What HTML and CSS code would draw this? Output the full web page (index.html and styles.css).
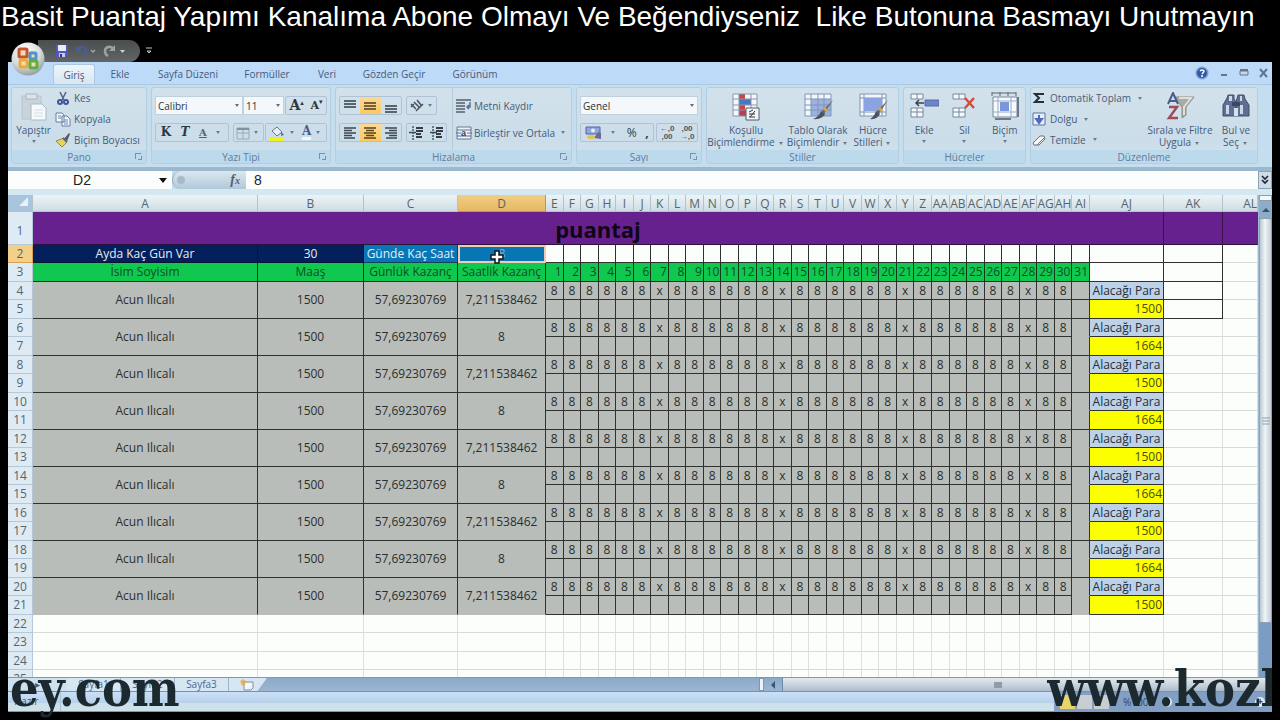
FILE: index.html
```html
<!DOCTYPE html>
<html lang="tr">
<head>
<meta charset="utf-8">
<title>puantaj</title>
<link rel="stylesheet" href="styles.css">
</head>
<body>
<h1 class="banner">Basit Puantaj Yapımı Kanalıma Abone Olmayı Ve Beğendiyseniz&nbsp; Like Butonuna Basmayı Unutmayın</h1>

<div class="window">
  <header class="titlebar">
    <button class="office" aria-label="Office">
      <svg width="36" height="36" viewBox="0 0 36 36"><defs><radialGradient id="orb" cx=".4" cy=".25" r=".8"><stop offset="0" stop-color="#fff"/><stop offset=".6" stop-color="#d5d9d9"/><stop offset="1" stop-color="#8e9696"/></radialGradient></defs><circle cx="18" cy="18" r="16.500" fill="url(#orb)"/><path d="M10 10h15v15H10z" fill="#f5dcae"/><g fill="none" stroke-width="3"><rect x="9" y="8" width="8" height="8" rx="1" stroke="#c4552e"/><rect x="20" y="12" width="6" height="6" rx="1" stroke="#4d94cd"/><rect x="10" y="19" width="7" height="7" rx="1" stroke="#edaa3c"/><rect x="20" y="20" width="7" height="7" rx="1" stroke="#63ae42"/></g></svg>
    </button>
    <div class="quick">
      <button aria-label="Kaydet"><svg width="14" height="14" viewBox="0 0 14 14"><path d="M1 1h12v12H1z" fill="#5457b8"/><path d="M3 1h8v6H3z" fill="#e8ecfa"/><path d="M4 9h6v4H4z" fill="#c9cbe8"/><path d="M5 10h2v3H5z" fill="#34377e"/></svg></button>
      <button aria-label="Geri al"><svg width="22" height="14" viewBox="0 0 22 14"><path d="M3 6c2-4 8-4 8 1 0 2-1 4-3 5" fill="none" stroke="#4c5a96" stroke-width="2.500"/><path d="M1 2v6h6z" fill="#4c5a96"/><path d="M16 6l2 2 2-2" fill="none" stroke="#a0a4a6" stroke-width="1.500"/></svg></button>
      <button aria-label="Yinele"><svg width="24" height="14" viewBox="0 0 24 14"><path d="M10 5C8 1 2 3 2 7c0 2 1 4 3 5" fill="none" stroke="#9ca1a2" stroke-width="2.500"/><path d="M12 1v6H6z" fill="#9ca1a2"/><path d="M17 6h5l-2.500 3z" fill="#d0d3d4"/></svg></button>
    </div>
    <button class="more" aria-label="Özelleştir"><svg width="6" height="8" viewBox="0 0 6 8"><path d="M0 1h6M1 4h4l-2 2z" stroke="#c8c8c8" fill="none"/></svg></button>
  </header>

  <nav class="tabs">
    <button class="tab active">Giriş</button><button class="tab t2">Ekle</button><button class="tab t3">Sayfa Düzeni</button><button class="tab t4">Formüller</button><button class="tab t5">Veri</button><button class="tab t6">Gözden Geçir</button><button class="tab t7">Görünüm</button>
    <div class="winctl">
      <button aria-label="Yardım"><svg width="14" height="14" viewBox="0 0 14 14"><circle cx="7" cy="7" r="6.500" fill="#7d9ed0"/><circle cx="7" cy="7" r="5" fill="#3159a6"/><path d="M5 5q2-2 4 0 0 1-2 3M7 9v2" stroke="#fff" stroke-width="1.500" fill="none"/></svg></button>
      <button aria-label="Küçült"><svg width="10" height="14" viewBox="0 0 10 14"><path d="M2 9h6" stroke="#5e7698" stroke-width="2"/></svg></button>
      <button aria-label="Önceki boyut"><svg width="10" height="14" viewBox="0 0 10 14"><path d="M1 5h8v4H1z" fill="#cbd8e4" stroke="#5e7698"/><path d="M1 4h8" stroke="#5e7698" stroke-width="2"/></svg></button>
      <button aria-label="Kapat"><svg width="10" height="14" viewBox="0 0 10 14"><path d="M1 3l7 8M8 3l-7 8" stroke="#5e7698" stroke-width="2"/></svg></button>
    </div>
  </nav>

  <div class="ribbon">
    <section class="group pano">
      <div class="body">
        <button class="big paste"><svg width="32" height="30" viewBox="0 0 32 30"><path d="M4 4h19v23H4z" fill="#c9d3da" stroke="#b8c4cc"/><path d="M8 2h11v5H8z" fill="#dde3e6" stroke="#aab6c0"/><path d="M13 12h11l4 4v12H13z" fill="#f7fafb" stroke="#a6b9c9"/><path d="M16 18h9M16 21h9M16 24h9" stroke="#d2dce5"/></svg><span>Yapıştır</span><i class="caret"></i></button>
        <div class="list">
          <button><svg width="16" height="16" viewBox="0 0 16 16"><path d="M5 2l4 8M11 2l-4 8" stroke="#586786" stroke-width="1.600"/><g fill="none" stroke="#3e5694" stroke-width="2"><circle cx="5" cy="12" r="2"/><circle cx="11" cy="12" r="2"/></g></svg>Kes</button>
          <button><svg width="16" height="16" viewBox="0 0 16 16"><g fill="#f4f8fd" stroke="#667da8"><path d="M1 2h6l2 2v7H1zM7 5h5l3 3v7H7z"/></g><path d="M3 5h3M3 7h4M9 9h4M9 11h4M9 13h4" stroke="#6f89bb"/></svg>Kopyala</button>
          <button><svg width="16" height="16" viewBox="0 0 16 16"><path d="M9 7l5-6 1 1-3 7z" fill="#53565e"/><path d="M1 9l8-3 3 4-5 5z" fill="#e8d45d" stroke="#8c8950"/><path d="M8 6l4 4" stroke="#54648c" stroke-width="2"/></svg>Biçim Boyacısı</button>
        </div>
      </div>
      <footer>Pano<i class="launch"></i></footer>
    </section>

    <section class="group font">
      <div class="body rows">
        <div class="row">
          <label class="combo fam"><select aria-label="Yazı tipi"><option>Calibri</option></select></label><label class="combo size"><select aria-label="Boyut"><option>11</option></select></label>
          <div class="set end"><button class="serif">A<sup>▴</sup></button><button class="serif small">A<sup>▾</sup></button></div>
        </div>
        <div class="row">
          <div class="set s1"><button class="serif"><b>K</b></button><button class="serif"><i>T</i></button><button class="serif small"><u>A</u></button><i class="caret"></i></div>
          <div class="set s2"><button aria-label="Kenarlık"><svg width="14" height="14" viewBox="0 0 14 14"><path d="M1 2h12v11H1zM7 2v11M1 7h12" fill="none" stroke="#9aa9b7"/><path d="M1 3h12" stroke="#8292a2" stroke-width="2"/></svg></button><i class="caret"></i></div>
          <div class="set s3"><button aria-label="Dolgu rengi"><svg width="16" height="16" viewBox="0 0 16 16"><path d="M3 6l5-4 5 5-5 4z" fill="#eaf0f2" stroke="#67788e"/><path d="M12 6l3 4-3 1z" fill="#5677b4"/><path d="M0 12h15v4H0z" fill="#f3f11c"/></svg></button><i class="caret"></i><button class="serif fc">A</button><i class="caret"></i></div>
        </div>
      </div>
      <footer>Yazı Tipi<i class="launch"></i></footer>
    </section>

    <section class="group align">
      <div class="body rows half">
        <div class="row">
          <div class="set three"><button aria-label="Üste hizala"><svg width="14" height="14"><path d="M1 2h12M1 5h12M1 8h12" stroke="#333d46" stroke-width="1.500"/></svg></button><button class="on" aria-label="Ortaya hizala"><svg width="14" height="14"><path d="M1 4h12M1 7h12M1 10h12" stroke="#4d3c1c" stroke-width="1.500"/></svg></button><button aria-label="Alta hizala"><svg width="14" height="14"><path d="M1 7h12M1 10h12M1 13h12" stroke="#333d46" stroke-width="1.500"/></svg></button></div>
          <div class="set s2"><button aria-label="Yönlendirme"><svg width="16" height="14" viewBox="0 0 16 14"><path d="M2 5l5 5M2 8l3-3M5 3l5 5M8 1l4 5M7 12l7-7" stroke="#49525b" stroke-width="1.500" fill="none"/></svg></button><i class="caret"></i></div>
        </div>
        <div class="row">
          <div class="set three"><button aria-label="Sola"><svg width="14" height="14"><path d="M1 2h12M1 4.500h8M1 7h12M1 9.500h8M1 12h11" stroke="#3d4852" stroke-width="1.400"/></svg></button><button class="on" aria-label="Ortala"><svg width="14" height="14"><path d="M1 2h12M3 4.500h8M1 7h12M3 9.500h8M1 12h12" stroke="#5b431a" stroke-width="1.400"/></svg></button><button aria-label="Sağa"><svg width="14" height="14"><path d="M1 2h12M5 4.500h8M1 7h12M5 9.500h8M2 12h11" stroke="#3d4852" stroke-width="1.400"/></svg></button></div>
          <div class="set two"><button aria-label="Girintiyi azalt"><svg width="15" height="14"><path d="M7 2h7M7 5h7M7 8h5M7 11h6" stroke="#333d46" stroke-width="2"/><path d="M4 0v14" stroke="#4d5862" stroke-width="1.500" stroke-dasharray="2 1"/><path d="M7 6.500H0" stroke="#3d4852" stroke-width="1.500"/></svg></button><button aria-label="Girintiyi artır"><svg width="15" height="14"><path d="M7 2h7M7 5h7M7 8h5M7 11h6" stroke="#333d46" stroke-width="2"/><path d="M4 0v14" stroke="#4d5862" stroke-width="1.500" stroke-dasharray="2 1"/><path d="M8 6.500H1" stroke="#3d4852" stroke-width="1.500"/></svg></button></div>
        </div>
      </div>
      <div class="body rows wrapcol">
        <div class="row"><button class="txt"><svg width="16" height="14" viewBox="0 0 16 14"><path d="M0 1h15M0 4h9M0 7h9M0 10h9M0 13h9" stroke="#55606c" stroke-width="1.500"/><path d="M14 3v5h-3M13 6l-2 2 2 2" stroke="#55739b" stroke-width="1.500" fill="none"/></svg>Metni Kaydır</button></div>
        <div class="row"><button class="txt"><svg width="16" height="14" viewBox="0 0 16 14"><path d="M1 1h14v12H1z" fill="#eef3f8" stroke="#67788c"/><path d="M1 4h14M1 10h14M0 7h5M11 7h5" stroke="#5770a0"/><text x="5" y="10" font-size="9" font-weight="bold" fill="#3a4250" font-family="Liberation Sans, sans-serif">a</text></svg>Birleştir ve Ortala<i class="caret"></i></button></div>
      </div>
      <footer>Hizalama<i class="launch"></i></footer>
    </section>

    <section class="group number">
      <div class="body rows">
        <div class="row"><label class="combo fmt"><select aria-label="Sayı biçimi"><option>Genel</option></select></label></div>
        <div class="row">
          <div class="set n1"><button aria-label="Para birimi"><svg width="17" height="16" viewBox="0 0 17 16"><path d="M1 2h14v7H1z" fill="#90a6dd" stroke="#5265a4"/><circle cx="8" cy="5.500" r="2" fill="#e8eefb"/><path d="M9 13l4-6 3 1v6z" fill="#6c6d93"/><ellipse cx="6" cy="12" rx="4" ry="2" fill="#ddc453"/></svg></button><i class="caret"></i><button class="pct">%</button><button class="pct"><b>,</b></button></div>
          <div class="set end n2"><button class="dec">←,0<br>,00</button><button class="dec">,00<br>→,0</button></div>
        </div>
      </div>
      <footer>Sayı<i class="launch"></i></footer>
    </section>

    <section class="group styles">
      <div class="body">
        <button class="big w1"><svg width="30" height="30" viewBox="0 0 30 30"><path d="M2 2h24v22H2z" fill="#f4f8fd"/><path d="M8 2h6v22H8z" fill="#c84540"/><path d="M8 7h12v6H8z" fill="#4a78c0"/><path d="M8 18h10v6H8z" fill="#b5404f"/><path d="M2 2h24v22H2zM8 2v22M20 2v22M2 7h24M2 13h24M2 18h24" fill="none" stroke="#8797ac"/><path d="M15 16h13v12H15z" fill="#f4f5f6" stroke="#555e69"/><path d="M18 20l4-2M18 22h6M24 19l-5 6M18 25h6" stroke="#333" fill="none"/></svg><span>Koşullu<br>Biçimlendirme<i class="caret"></i></span></button>
        <button class="big w2"><svg width="30" height="30" viewBox="0 0 30 30"><path d="M2 2h26v22H2z" fill="#f2f7fc"/><path d="M8 7h20v17H8z" fill="#9bb1e2"/><path d="M2 2h26v22H2zM8 2v22M15 2v22M21 2v22M2 7h26M2 13h26M2 18h26" fill="none" stroke="#8096b2"/><path d="M30 8L21 22l-3-2z" fill="#6b6b63"/><path d="M18 19l4 3q-3 6-12 5 6-2 8-8z" fill="#4d5160"/><path d="M21 16l3 3" stroke="#d3a74d" stroke-width="3"/></svg><span>Tablo Olarak<br>Biçimlendir<i class="caret"></i></span></button>
        <button class="big w3"><svg width="30" height="30" viewBox="0 0 30 30"><path d="M2 2h26v22H2z" fill="#f2f7fc" stroke="#8096b2"/><path d="M6 2v22M24 2v22M2 6h26M2 20h26" stroke="#8096b2"/><path d="M6 6h18v13H6z" fill="#8ba3df"/><path d="M30 8L21 22l-3-2z" fill="#6b6b63"/><path d="M18 19l4 3q-3 6-10 5 4-2 6-8z" fill="#4d5160"/><path d="M21 16l3 3" stroke="#d3a74d" stroke-width="3"/></svg><span>Hücre<br>Stilleri<i class="caret"></i></span></button>
      </div>
      <footer>Stiller</footer>
    </section>

    <section class="group cells">
      <div class="body">
        <button class="big"><svg width="30" height="30" viewBox="0 0 30 30"><path d="M2 2h12v5H2zM8 2v5M2 16h12v9H2zM8 16v9M2 20h12" fill="#f6f9fc" stroke="#76879c"/><path d="M16 8h14v6H16z" fill="#6d85c8" stroke="#566ba7"/><path d="M15 11H7M10 8l-3 3 3 3" fill="none" stroke="#39424e" stroke-width="1.500"/></svg><span>Ekle</span><i class="caret"></i></button>
        <button class="big"><svg width="30" height="30" viewBox="0 0 30 30"><path d="M4 2h12v5H4zM10 2v5M4 16h12v9H4zM10 16v9M4 20h12" fill="#f6f9fc" stroke="#76879c"/><path d="M5 8h12v6H5z" fill="#d4dfec"/><path d="M16 6l9 10M25 6l-9 10" stroke="#d64a3b" stroke-width="2.500"/></svg><span>Sil</span><i class="caret"></i></button>
        <button class="big"><svg width="30" height="30" viewBox="0 0 30 30"><path d="M2 1h24M2 0v4M10 0v4M18 0v4M26 0v4" stroke="#5b6775"/><path d="M3 5h24v20H3z" fill="#f6f9fc" stroke="#76879c"/><path d="M8 5v20M21 5v20M3 9h24M3 20h24" stroke="#9aacc2"/><path d="M10 10h9v9h-9z" fill="#7a96dc"/><path d="M28 5v20M5 27h16" stroke="#6a7889" stroke-width="2"/></svg><span>Biçim</span><i class="caret"></i></button>
      </div>
      <footer>Hücreler</footer>
    </section>

    <section class="group edit">
      <div class="body">
        <div class="list">
          <button><svg width="16" height="16" viewBox="0 0 16 16"><path d="M12 5V4H4l4 4-4 4h8v-1" fill="none" stroke="#22303a" stroke-width="2"/></svg>Otomatik Toplam<i class="caret"></i></button>
          <button><svg width="16" height="16" viewBox="0 0 16 16"><path d="M2 2h12v12H2z" fill="#e7eefa" stroke="#5870a8"/><path d="M8 4v6M5 8l3 4 3-4z" stroke="#5068c0" stroke-width="2" fill="#5068c0"/></svg>Dolgu<i class="caret"></i></button>
          <button><svg width="16" height="16" viewBox="0 0 16 16"><path d="M2 11l7-7h4l1 3-6 6H3z" fill="#f4f5f8" stroke="#69737f"/><path d="M6 13l7-7" stroke="#69737f"/></svg>Temizle<i class="caret"></i></button>
        </div>
        <button class="big w4"><svg width="30" height="30" viewBox="0 0 30 30"><path d="M9 5h20l-8 10v8l-4 3V15z" fill="#a9aba4" stroke="#888a84"/><path d="M14 6h12l-7 9v8" fill="none" stroke="#dfe0da" stroke-width="2"/><path d="M3 12L8 1l5 11M5 9h6" fill="none" stroke="#4a5d91" stroke-width="2"/><path d="M4 15h8L4 26h9" fill="none" stroke="#a14a58" stroke-width="2.500"/></svg><span>Sırala ve Filtre<br>Uygula<i class="caret"></i></span></button>
        <button class="big w5"><svg width="30" height="30" viewBox="0 0 30 30"><path d="M7 3h6v4l2 3v14H2V13l4-7zM17 3h6l1 4 4 6v11H15V10z" fill="#5e6f91" stroke="#43506d"/><path d="M5 13h3v9H5zM19 13h3v9h-3zM8 4h3v5H8zM19 4h2v5h-2z" fill="#cdd7e6"/><path d="M11 10h8v4h-8z" fill="#3c4761"/><path d="M13 16h4v8h-4z" fill="#d2e2ec"/></svg><span>Bul ve<br>Seç<i class="caret"></i></span></button>
      </div>
      <footer>Düzenleme</footer>
    </section>
  </div>

  <div class="formula">
    <input class="name" aria-label="Ad kutusu" value="D2"><i class="drop"></i>
    <div class="fx"><i class="knob"></i><em>f<small>x</small></em></div>
    <input class="value" aria-label="Formül çubuğu" value="8">
    <button class="expand" aria-label="Genişlet"><svg width="8" height="10" viewBox="0 0 8 10"><path d="M1 1l3 3 3-3M1 5l3 3 3-3" fill="none" stroke="#222c33" stroke-width="1.700"/></svg></button>
  </div>

  <main class="sheet">
    <div class="viewport"><table class="grid" id="grid"></table></div>
    <div class="vscroll"><i class="split"></i><button class="up" aria-label="Yukarı"><svg width="8" height="5"><path d="M0 5l4-4 4 4z" fill="#34546f"/></svg></button><div class="thumb"><svg width="8" height="8"><path d="M0 1h8M0 4h8M0 7h8" stroke="#8d9fae"/></svg></div></div>
  </main>

  <div class="bottom">
    <div class="nav">◂ ▸ ▸</div>
    <button class="stab">Sayfa1</button><button class="stab">Sayfa2</button><button class="stab">Sayfa3</button>
    <button class="stab new" aria-label="Yeni sayfa"><svg width="16" height="12" viewBox="0 0 16 12"><path d="M5 3h9v6l-2 2H5z" fill="#f3f6fa" stroke="#7b8fa9"/><path d="M4 0v7M1 3h7M2 1l4 5M6 1L2 6" stroke="#e4a93a"/></svg></button>
    <div class="hscroll"><i class="handle"></i><button aria-label="Sola kaydır"><svg width="6" height="8"><path d="M5 0v8L1 4z" fill="#34577e"/></svg></button><div class="hthumb"><i></i></div></div>
  </div>
  <div class="status"><span class="ready">Hazır</span><div class="views"><i class="sel"></i><i></i><i></i><span>%100</span><b>−</b><b class="plus">+</b></div></div>
</div>

<div class="mark left">ey.com</div>
<div class="mark right">www.kozl</div>
<script src="sheet.js"></script>
</body>
</html>
```
FILE: styles.css
```css
* { box-sizing: border-box; }
body { margin: 0; height: 100vh; background: #000; display: flex; flex-direction: column; overflow: hidden; position: relative; font-family: "Open Sans", "Noto Sans", sans-serif; font-size: 10px; color: #465b7c; padding: 0 8px 8px; }
button, input, select { font: inherit; color: inherit; border: 0; background: none; padding: 0; margin: 0; }
button svg { display: block; flex: none; }
.banner { margin: 0 -8px; padding-left: 1px; height: 36px; font: 400 28px/34px "Liberation Sans", Arial, sans-serif; color: #fff; white-space: nowrap; }
.window { flex: 1; min-height: 0; display: flex; flex-direction: column; }

.titlebar { height: 26px; display: flex; align-items: center; position: relative; padding: 3px 0 0 30px; flex: none; }
.office { position: absolute; left: 2px; top: 5px; z-index: 2; }
.quick { height: 22px; width: 102px; border-radius: 0 11px 11px 0; background: linear-gradient(#4b4e4f, #626565); display: flex; align-items: center; gap: 6px; padding-left: 17px; }
.more { margin-left: 6px; }

.tabs { height: 22px; background: #bddaf8; display: flex; padding-left: 45px; flex: none; }
.tab { height: 24px; width: 64px; text-align: center; }
.tab.active { width: 42px; background: linear-gradient(#eef6fb, #d8e6ef); border-radius: 3px 3px 0 0; margin-top: 2px; height: 20px; border: 1px solid #a9c8e4; border-bottom: 0; }
.tab.t2 { width: 50px; } .tab.t3 { width: 86px; } .tab.t4 { width: 72px; } .tab.t5 { width: 48px; } .tab.t6 { width: 86px; } .tab.t7 { width: 76px; }
.winctl { margin-left: auto; display: flex; gap: 10px; align-items: center; padding-right: 3px; }

.ribbon { display: flex; gap: 4px; background: #c5deef; padding: 2px 14px 3px 3px; border-top: 1px solid #aac8df; border-bottom: 4px solid #9bb8cc; height: 87px; flex: none; }
.group { display: flex; flex-wrap: wrap; flex: none; border: 1px solid #b4cddf; border-radius: 3px; background: linear-gradient(#d2e2ec, #cbdde9 70%, #d2e5ef); overflow: hidden; }
.group footer { width: 100%; height: 15px; line-height: 14px; background: #bdd9ec; text-align: center; color: #61799b; position: relative; align-self: flex-end; }
.launch { position: absolute; right: 5px; top: 3px; width: 6px; height: 6px; border-left: 1px solid #7890aa; border-top: 1px solid #7890aa; }
.launch::after { content: ""; position: absolute; right: -1px; bottom: -1px; width: 3px; height: 3px; border-right: 1px solid #7890aa; border-bottom: 1px solid #7890aa; }
.body { display: flex; height: 62px; flex: 1; }
.pano { width: 136px; } .font { width: 180px; } .align { width: 237px; } .number { width: 126px; } .styles { width: 193px; } .cells { width: 123px; } .edit { flex: 1; }

.big { display: flex; flex-direction: column; align-items: center; line-height: 12px; flex: 1; padding-top: 4px; white-space: nowrap; }
.big span { margin-top: 2px; }
.big > .caret { margin: 4px 0 0; }
.paste { flex: none; width: 43px; }
.w1 { flex: none; width: 78px; } .w2 { flex: none; width: 66px; } .w3 { flex: none; width: 44px; }
.w4 { flex: none; width: 70px; margin-left: auto; } .w5 { flex: none; width: 42px; }
.caret { display: inline-block; width: 0; height: 0; border: 2px solid transparent; border-top: 3px solid #6b7d94; border-bottom: 0; vertical-align: middle; margin: 0 2px 0 4px; flex: none; }
.list { display: flex; flex-direction: column; }
.list button { height: 21px; display: flex; align-items: center; gap: 3px; white-space: nowrap; }
.edit .list { padding-left: 0; }

.rows { flex-direction: column; gap: 8px; padding: 8px 3px 0; }
.row { display: flex; height: 19px; }
.half { flex: none; width: 117px; border-right: 1px solid #b6c9d8; }
.wrapcol { padding-left: 3px; }
.combo { position: relative; display: block; background: #f4f8fa; border: 1px solid #c0d1de; height: 19px; }
.combo select { appearance: none; width: 100%; height: 17px; padding: 0 2px; color: #2a333b; display: block; }
.combo::after { content: ""; position: absolute; right: 3px; top: 7px; border: 2px solid transparent; border-top: 3px solid #5d6b7a; border-bottom: 0; }
.fam { width: 88px; } .size { width: 41px; } .fmt { width: 118px; }
.set { display: flex; align-items: center; justify-content: space-around; border: 1px solid #b0c3d6; border-radius: 2px; height: 19px; }
.set .caret { margin: 0 3px 0 0; }
.end { margin-left: auto; width: 42px; }
.s1 { width: 74px; margin-right: 4px; } .s2 { width: 31px; } .s3 { margin-left: auto; width: 62px; }
.three { width: 63px; margin-right: 4px; } .two { width: 41px; } .n1 { width: 74px; } .n2 { width: 42px; }
.three button { flex: 1; height: 17px; display: flex; align-items: center; justify-content: center; }
.three .on { background: linear-gradient(#fbd99a, #f9c961); }
.serif { font: 700 14px/15px "DejaVu Serif", serif; color: #2d3740; }
.serif sup { font-size: 7px; line-height: 0; vertical-align: 5px; }
.serif.small { font-size: 11px; }
.s1 .serif { font-size: 12px; } .s1 .small { font-size: 10px; color: #56626e; }
.set .fc { color: #4a5a90; border-bottom: 3px solid #f4f6f8; font-size: 12px; line-height: 12px; }
.txt { display: flex; align-items: center; gap: 2px; white-space: nowrap; }
.pct { font-size: 12px; color: #333d46; }
.dec { font: 700 8px/8px "Liberation Sans", sans-serif; color: #4b5560; }

.formula { display: flex; height: 18px; background: #c3dcec; font: 14px/18px "Liberation Sans", Arial, sans-serif; color: #222; align-items: stretch; flex: none; }
.name { width: 148px; text-align: center; background: #fcfefe; }
.drop { width: 16px; background: #fcfefe; position: relative; }
.drop::after { content: ""; position: absolute; left: 3px; top: 7px; border: 4px solid transparent; border-top: 5px solid #111; border-bottom: 0; }
.fx { width: 74px; border-radius: 9px 0 0 9px; background: linear-gradient(#dbe8f0, #b1c8da); border-left: 1px solid #93acbf; display: flex; justify-content: space-between; align-items: center; padding: 0 6px 0 4px; }
.knob { width: 8px; height: 8px; border-radius: 50%; background: #a9bac8; }
.fx em { font: italic 700 14px/16px "Liberation Serif", serif; color: #56616d; }
.fx small { font-size: 10px; }
.value { flex: 1; min-width: 0; background: #fcfefe; padding-left: 8px; }
.expand { width: 14px; background: #cfdde8; border: 1px solid #8ba2b4; display: flex; align-items: center; justify-content: center; }

.sheet { flex: 1; min-height: 0; display: flex; border-top: 6px solid #d3e8f1; background: #fcfefc; }
.viewport { flex: 1; min-width: 0; overflow: hidden; }
.grid { width: 100%; table-layout: fixed; border-collapse: separate; border-spacing: 0; font: 12px/16px "Open Sans", "Noto Sans", sans-serif; color: #30352f; }
.grid td, .grid th { padding: 0; border-right: 1px solid #dbe2dc; border-bottom: 1px solid #d5dcd6; text-align: center; white-space: nowrap; overflow: hidden; font-weight: 400; }
.c-row { width: 25px; } .c-a { width: 225px; } .c-b { width: 106px; } .c-c { width: 94px; } .c-d { width: 88px; } .c-aj { width: 74px; } .c-ak { width: 59px; } .c-al { width: 35px; }
.grid .head th { height: 17px; background: linear-gradient(#edf4f7, #cddde4); border-color: #b2c3cc; color: #56656c; overflow: visible; font-size: 12px; line-height: 15px; }
.grid .head .sel { background: linear-gradient(#efce86, #e7b862); border-color: #c69348; }
.grid .head .corner { background: #a9c4dd; padding: 0 4px 3px; }
.corner svg { display: block; margin-left: auto; }
.grid .head .cut { text-align: right; overflow: hidden; }
.grid .rh { background: #dfebf4; border-color: #b4c8d7; color: #56656c; line-height: 16px; }
.grid .rh.sel { background: #f4cf88; border-color: #d8a14e; }
.r19 { height: 19px; } .r18 { height: 18px; } .r1 { height: 33px; }
.grid .rh.r1 { padding-top: 6px; }
.grid .title td { background: #67218f; border-right-color: #35154a; border-bottom-color: #2c133c; font: 700 22px/30px "Open Sans", "Noto Sans", sans-serif; color: #0e0614; vertical-align: bottom; }
.grid .title td:last-child { border-right-color: #67218f; }
.grid .navy { background: #04205c; color: #e6ecf5; border-color: #0a1430; }
.grid .blue { background: #0875b5; color: #e0f0fa; border-color: #143f5e; }
.grid td.active { border: 2px solid #efc9b0; overflow: visible; position: relative; color: #79b4dc; line-height: 14px; }
.cursor { position: absolute; left: 30px; top: 3px; }
.grid .green { background: #10c850; color: #0c4f22; border-color: #0b3a1a; }
.grid td.right { text-align: right; padding-right: 1px; }
.grid .gray { background: #b9bdb9; border-color: #303230; color: #2b2f2b; }
.grid td.open { border-bottom-color: #b9bdb9; }
.grid .box { border-color: #303230; }
.grid .para { background: #bdd2e6; border-color: #303230; color: #263040; }
.grid .pay { background: #fcff00; border-color: #303230; color: #4c4d12; }

.vscroll { width: 14px; flex: none; background: #7b9dc4; display: flex; flex-direction: column; border-left: 1px solid #9db7cf; }
.split { height: 6px; background: #f2f7fa; border: 1px solid #88a0b4; }
.up { height: 17px; background: #8facc6; display: flex; align-items: center; justify-content: center; }
.thumb { height: 405px; background: linear-gradient(90deg, #b9c7d2, #f0f5f7 45%, #c0ccd7); border: 1px solid #8ea3b8; border-radius: 2px; display: flex; align-items: center; justify-content: center; }

.bottom { height: 15px; flex: none; display: flex; background: linear-gradient(#8ba9c9, #9bb6d0); border-top: 1px solid #7e99b6; border-bottom: 1px solid #7792ad; font-size: 10px; line-height: 13px; }
.nav { width: 59px; background: #cfe1ef; text-align: center; }
.stab { width: 54px; background: #d6e6f3; border-right: 1px solid #9db5cc; color: #4d6690; }
.new { width: 38px; padding-left: 10px; clip-path: polygon(0 0, 100% 0, 75% 100%, 0 100%); }
.hscroll { margin-left: auto; width: 513px; display: flex; align-items: stretch; }
.handle { width: 5px; background: #eaf4fa; border: 1px solid #7c97b3; margin-right: 6px; }
.hscroll button { width: 12px; display: flex; align-items: center; }
.hthumb { flex: 1; background: linear-gradient(#e4eaef, #aebdcb); border-left: 1px solid #6f89a3; display: flex; align-items: center; justify-content: center; padding-right: 60px; }
.hthumb i { width: 8px; height: 6px; background: #909ba6; }
.status { height: 20px; flex: none; display: flex; justify-content: space-between; background: linear-gradient(#c9e0f8, #b8d1e9 55%, #cde1ea 60%); border-bottom: 1px solid #8297a8; line-height: 18px; }
.ready { padding-left: 6px; width: 53px; border-right: 1px solid #a9c1d5; }
.views { width: 218px; background: #829fc4; display: flex; align-items: center; gap: 2px; padding-left: 6px; color: #31456a; }
.views i { width: 15px; height: 14px; background: #c8ced0; }
.views .sel { background: #e6d46c; }
.views span { margin: 0 12px; }
.views b { width: 10px; height: 10px; line-height: 9px; text-align: center; border-radius: 50%; background: #e5edf4; }
.views .plus { margin-left: auto; margin-right: 7px; }

.mark { position: absolute; bottom: 2px; font: 700 50px/58px "DejaVu Serif Condensed", "DejaVu Serif", serif; color: #1c2a2f; white-space: nowrap; }
.left { left: 10px; }
.right { left: 1047px; right: 8px; overflow: hidden; }
```
FILE: sheet.js
```js
const grid = document.getElementById("grid");
const days = Array.from({ length: 31 }, (_, i) => i + 1);
const colName = i => i < 26 ? String.fromCharCode(65 + i) : "A" + String.fromCharCode(39 + i);
const isSunday = d => d % 7 === 0;

let html = "<colgroup>" + ["row", "a", "b", "c", "d"].map(c => `<col class="c-${c}">`).join("")
  + days.map(() => "<col>").join("")
  + ["aj", "ak", "al"].map(c => `<col class="c-${c}">`).join("") + "</colgroup>";

html += '<tr class="head"><th class="corner"><svg width="9" height="9"><path d="M9 0v9H0z" fill="#e8f1f8"/></svg></th>';
for (let i = 0; i < 38; i++) {
  const cls = i === 3 ? "sel" : i === 37 ? "cut" : "";
  html += `<th class="${cls}">${colName(i)}</th>`;
}
html += "</tr>";

html += '<tr class="title"><th class="rh r1">1</th><td colspan="36">puantaj</td><td></td><td></td></tr>';

html += '<tr><th class="rh sel r18">2</th><td class="navy">Ayda Kaç Gün Var</td><td class="navy">30</td>'
  + '<td class="blue">Günde Kaç Saat</td><td class="blue active">8<svg class="cursor" width="14" height="14" viewBox="0 0 14 14"><path d="M5 1h4v4h4v4H9v4H5V9H1V5h4z" fill="#fff" stroke="#151515" stroke-width="1.500"/></svg></td>'
  + days.map(() => '<td class="box"></td>').join("") + '<td class="box"></td><td class="box"></td><td></td></tr>';

html += '<tr><th class="rh r19">3</th>'
  + ["İsim Soyisim", "Maaş", "Günlük Kazanç", "Saatlik Kazanç"].map(t => `<td class="green">${t}</td>`).join("")
  + days.map(d => `<td class="green right">${d}</td>`).join("")
  + '<td class="box"></td><td class="box"></td><td></td></tr>';

for (let p = 0; p < 9; p++) {
  const r = 4 + p * 2;
  const alt = p % 2 === 1;
  const last = p === 8 ? " open" : "";
  const ak = p === 0 ? "box" : "";
  html += `<tr><th class="rh r18">${r}</th>`
    + ["Acun Ilıcalı", "1500", "57,69230769", alt ? "8" : "7,211538462"].map(t => `<td rowspan="2" class="gray${last}">${t}</td>`).join("")
    + days.map(d => `<td class="gray${d === 31 && p ? " open" : ""}">${d === 31 ? "" : isSunday(d) ? "x" : 8}</td>`).join("")
    + `<td class="para">Alacağı Para</td><td class="${ak}"></td><td></td></tr>`;
  html += `<tr><th class="rh r19">${r + 1}</th>`
    + days.map(d => `<td class="gray${d === 31 ? last : ""}"></td>`).join("")
    + `<td class="pay right">${alt ? 1664 : 1500}</td><td class="${ak}"></td><td></td></tr>`;
}

for (let r = 22; r < 26; r++) {
  html += `<tr><th class="rh ${r % 2 ? "r19" : "r18"}">${r}</th>` + "<td></td>".repeat(38) + "</tr>";
}
grid.innerHTML = html;
```
